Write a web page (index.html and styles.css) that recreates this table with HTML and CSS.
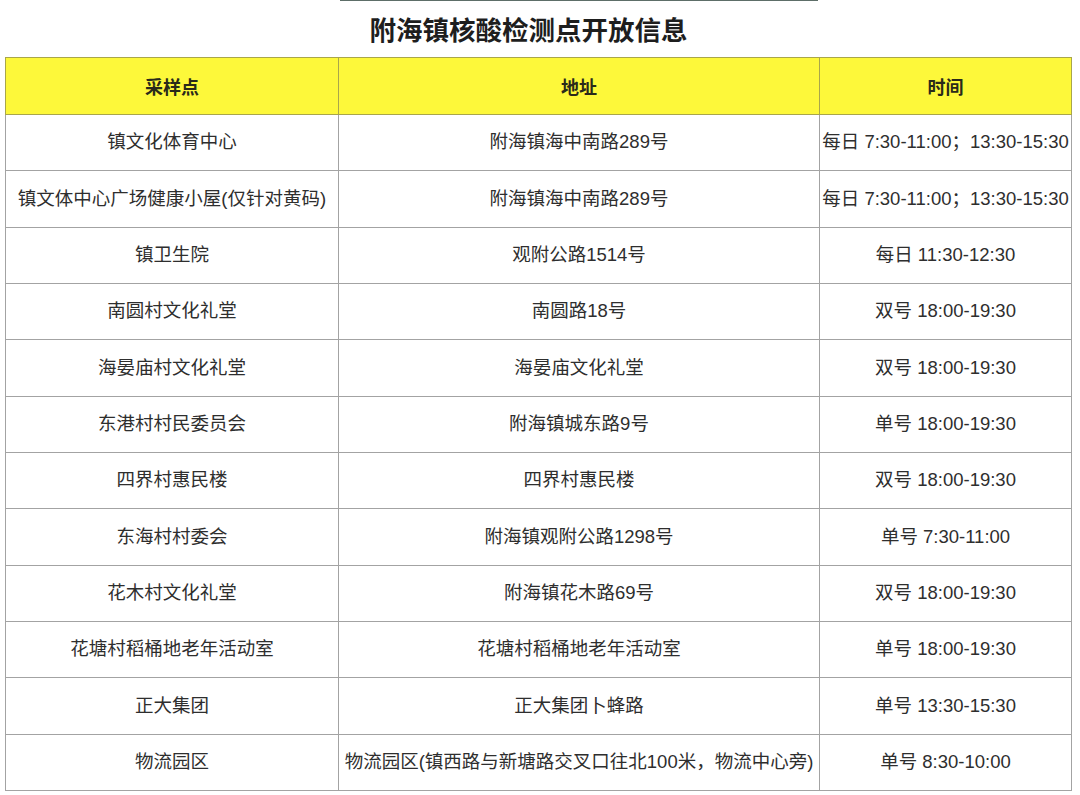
FILE: index.html
```html
<!DOCTYPE html>
<html lang="zh-CN">
<head>
<meta charset="utf-8">
<title>附海镇核酸检测点开放信息</title>
<link rel="stylesheet" href="styles.css">
</head>
<body>
<div class="page">
  <div class="topline"></div>
  <h1 class="title">附海镇核酸检测点开放信息</h1>
  <table class="sites">
    <colgroup>
      <col class="c1"><col class="c2"><col class="c3">
    </colgroup>
    <thead>
      <tr><th>采样点</th><th>地址</th><th>时间</th></tr>
    </thead>
    <tbody>
      <tr><td>镇文化体育中心</td><td>附海镇海中南路289号</td><td>每日 7:30-11:00；13:30-15:30</td></tr>
      <tr><td>镇文体中心广场健康小屋(仅针对黄码)</td><td>附海镇海中南路289号</td><td>每日 7:30-11:00；13:30-15:30</td></tr>
      <tr><td>镇卫生院</td><td>观附公路1514号</td><td>每日 11:30-12:30</td></tr>
      <tr><td>南圆村文化礼堂</td><td>南圆路18号</td><td>双号 18:00-19:30</td></tr>
      <tr><td>海晏庙村文化礼堂</td><td>海晏庙文化礼堂</td><td>双号 18:00-19:30</td></tr>
      <tr><td>东港村村民委员会</td><td>附海镇城东路9号</td><td>单号 18:00-19:30</td></tr>
      <tr><td>四界村惠民楼</td><td>四界村惠民楼</td><td>双号 18:00-19:30</td></tr>
      <tr><td>东海村村委会</td><td>附海镇观附公路1298号</td><td>单号 7:30-11:00</td></tr>
      <tr><td>花木村文化礼堂</td><td>附海镇花木路69号</td><td>双号 18:00-19:30</td></tr>
      <tr><td>花塘村稻桶地老年活动室</td><td>花塘村稻桶地老年活动室</td><td>单号 18:00-19:30</td></tr>
      <tr><td>正大集团</td><td>正大集团卜蜂路</td><td>单号 13:30-15:30</td></tr>
      <tr><td>物流园区</td><td>物流园区(镇西路与新塘路交叉口往北100米，物流中心旁)</td><td>单号 8:30-10:00</td></tr>
    </tbody>
  </table>
</div>
</body>
</html>
```
FILE: styles.css
```css
html, body {
  margin: 0;
  padding: 0;
  background: #ffffff;
}
body {
  font-family: "Liberation Sans", Arial, "Noto Sans CJK SC", sans-serif;
  color: #2b2b2b;
}
.page {
  width: 1080px;
  height: 795px;
  overflow: hidden;
}
.topline {
  margin-left: 340px;
  width: 478px;
  height: 1px;
  background: #5d6e68;
}
.title {
  margin: 0;
  height: 56px;
  display: flex;
  align-items: center;
  justify-content: center;
  padding-right: 23px;
  font-family: "Noto Sans CJK SC", sans-serif;
  font-size: 26.5px;
  font-weight: 700;
  color: #1e1e1e;
  line-height: 1;
}
.sites {
  margin-left: 5px;
  width: 1066px;
  border-collapse: collapse;
  table-layout: fixed;
}
.c1 { width: 333px; }
.c2 { width: 481px; }
.c3 { width: 252px; }
.sites th,
.sites td {
  padding: 0;
  text-align: center;
  vertical-align: middle;
  white-space: nowrap;
  font-size: 18.5px;
  line-height: 1;
}
.sites th {
  height: 56px;
  background: #fdf83a;
  border: 1px solid #a9a64a;
  font-family: "Noto Sans CJK SC", sans-serif;
  font-weight: 700;
  font-size: 18px;
  color: #2a2a1a;
}
.sites td {
  height: 55.33px;
  border: 1px solid #a3a3a3;
  color: #2e2e2e;
}
```
